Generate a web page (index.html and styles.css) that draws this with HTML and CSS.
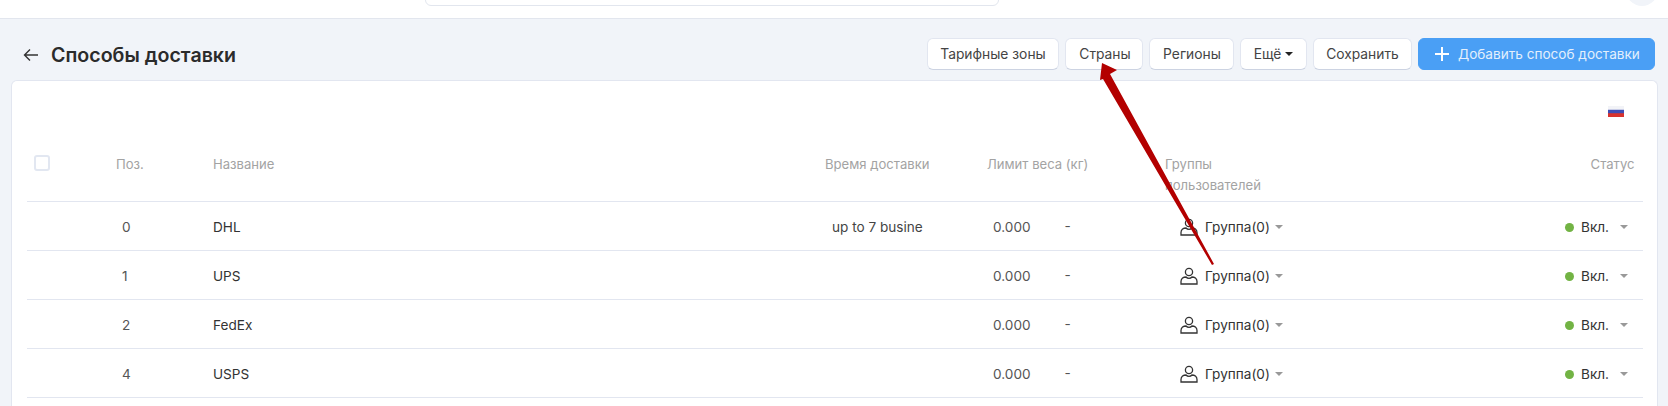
FILE: index.html
```html
<!DOCTYPE html>
<html lang="ru">
<head>
<meta charset="utf-8">
<title>Способы доставки</title>
<link rel="stylesheet" href="styles.css">
</head>
<body>
<header class="topbar">
  <div class="search"></div>
  <div class="avatar"></div>
</header>
<div class="titlebar">
  <div class="title-wrap">
    <svg class="back" viewBox="0 0 16 14" width="16" height="14"><path d="M15 7H1.500M7 1.500 1.500 7 7 12.500" fill="none" stroke="#333" stroke-width="1.4"/></svg>
    <h1>Способы доставки</h1>
  </div>
  <div class="actions">
    <button class="btn btn-zones">Тарифные зоны</button>
    <button class="btn btn-countries">Страны</button>
    <button class="btn btn-regions">Регионы</button>
    <button class="btn btn-more">Ещё<span class="caret-dark"></span></button>
    <button class="btn btn-save">Сохранить</button>
    <button class="btn primary"><svg viewBox="0 0 14 14" width="14" height="14"><path d="M7 0v14M0 7h14" stroke="#fff" stroke-width="2"/></svg>Добавить способ доставки</button>
  </div>
</div>
<main class="card">
  <div class="flag-row"><div class="flag"></div></div>
  <div class="row head">
    <div><span class="check"></span></div>
    <div>Поз.</div>
    <div>Название</div>
    <div>Время доставки</div>
    <div>Лимит веса (кг)</div>
    <div class="groups-head">Группы<br>пользователей</div>
    <div class="status-head">Статус</div>
  </div>
  <div class="row body">
    <div></div><div class="pos">0</div><div>DHL</div><div class="time">up to 7 busine</div>
    <div class="weight"><span class="num">0.000</span><span class="dash">-</span></div>
    <div class="group"><svg class="user" viewBox="0 0 18 18" width="18" height="18"><circle cx="9" cy="5" r="3.600"/><path d="M1 17v-2.500C1 11.500 3.500 10 6 10c.8 1 1.800 1.400 3 1.400s2.200-.4 3-1.400c2.500 0 5 1.500 5 4.500V17z"/></svg>Группа(0)<span class="caret"></span></div>
    <div class="status"><span class="dot"></span>Вкл.<span class="caret wide"></span></div>
  </div>
  <div class="row body">
    <div></div><div class="pos">1</div><div>UPS</div><div class="time"></div>
    <div class="weight"><span class="num">0.000</span><span class="dash">-</span></div>
    <div class="group"><svg class="user" viewBox="0 0 18 18" width="18" height="18"><circle cx="9" cy="5" r="3.600"/><path d="M1 17v-2.500C1 11.500 3.500 10 6 10c.8 1 1.800 1.400 3 1.400s2.200-.4 3-1.400c2.500 0 5 1.500 5 4.500V17z"/></svg>Группа(0)<span class="caret"></span></div>
    <div class="status"><span class="dot"></span>Вкл.<span class="caret wide"></span></div>
  </div>
  <div class="row body">
    <div></div><div class="pos">2</div><div>FedEx</div><div class="time"></div>
    <div class="weight"><span class="num">0.000</span><span class="dash">-</span></div>
    <div class="group"><svg class="user" viewBox="0 0 18 18" width="18" height="18"><circle cx="9" cy="5" r="3.600"/><path d="M1 17v-2.500C1 11.500 3.500 10 6 10c.8 1 1.800 1.400 3 1.400s2.200-.4 3-1.400c2.500 0 5 1.500 5 4.500V17z"/></svg>Группа(0)<span class="caret"></span></div>
    <div class="status"><span class="dot"></span>Вкл.<span class="caret wide"></span></div>
  </div>
  <div class="row body">
    <div></div><div class="pos">4</div><div>USPS</div><div class="time"></div>
    <div class="weight"><span class="num">0.000</span><span class="dash">-</span></div>
    <div class="group"><svg class="user" viewBox="0 0 18 18" width="18" height="18"><circle cx="9" cy="5" r="3.600"/><path d="M1 17v-2.500C1 11.500 3.500 10 6 10c.8 1 1.800 1.400 3 1.400s2.200-.4 3-1.400c2.500 0 5 1.500 5 4.500V17z"/></svg>Группа(0)<span class="caret"></span></div>
    <div class="status"><span class="dot"></span>Вкл.<span class="caret wide"></span></div>
  </div>
</main>
<svg class="annotation" viewBox="0 0 1668 406" width="1668" height="406"><polygon points="1102,63 1117,70 1110,74 1214,264 1212,265 1103,79 1100,80" fill="#b30000"/></svg>
</body>
</html>
```
FILE: styles.css
```css
* { box-sizing: border-box; }
html, body { margin: 0; height: 406px; overflow: hidden; }
body { background: #f1f4f9; font-family: Inter, "Liberation Sans", sans-serif; color: #333; font-size: 13.6px; position: relative; }
.topbar { height: 19px; background: #fff; border-bottom: 1px solid #e2e6ee; position: relative; overflow: hidden; }
.search { position: absolute; left: 425px; top: -20px; width: 574px; height: 26px; border: 1px solid #e2e6ee; border-radius: 6px; }
.avatar { position: absolute; left: 1626px; top: -26px; width: 32px; height: 32px; border-radius: 50%; background: #f1f4f9; }
.titlebar { height: 61px; display: flex; justify-content: space-between; align-items: flex-start; padding: 19px 13px 0 23px; }
.title-wrap { display: flex; align-items: center; height: 34px; }
.back { margin-right: 12px; }
h1 { margin: 0; font-size: 19.6px; font-weight: 600; color: #2b2b2b; }
.actions { display: flex; gap: 6px; }
.btn { height: 32px; padding: 0; background: #fff; border: 1px solid #e2e6f0; border-bottom-color: #ccd3e2; border-radius: 6px; font: 13.8px Inter, "Liberation Sans", sans-serif; color: #444; display: flex; align-items: center; justify-content: center; white-space: nowrap; }
.btn-zones { width: 132px; }
.btn-countries { width: 78px; padding-left: 2px; }
.btn-regions { width: 85px; padding-left: 1px; }
.btn-more { width: 67px; }
.btn-save { width: 99px; }
.primary { background: #4a9ff5; border-color: #4a9ff5; color: #e3effc; width: 237px; justify-content: flex-start; padding-left: 16px; font-size: 13.6px; }
.primary svg { margin-right: 9px; flex: none; }
.caret-dark { display: inline-block; margin-left: 4px; border: 4px solid transparent; border-top: 4px solid #222; border-bottom: 0; }
.card { height: 326px; margin: 0 10px 0 11px; background: #fff; border: 1px solid #e2e6f0; border-bottom: 0; border-radius: 6px 6px 0 0; padding: 0 14px 0 15px; overflow: hidden; }
.flag-row { height: 53px; display: flex; justify-content: flex-end; padding: 25px 19px 0 0; }
.flag { width: 16px; height: 11px; background: linear-gradient(#f2f3f7 0 30%, #3f4db5 38% 62%, #d8332e 70% 100%); }
.row { display: grid; grid-template-columns: 89px 97px 612px 162px 179px 334px 143px; border-bottom: 1px solid #e2e6f0; align-items: center; }
.head { height: 68px; align-items: start; color: #a3a3a3; font-size: 13.1px; line-height: 20px; padding-top: 20px; }
.check { display: block; width: 16px; height: 16px; margin: 1px 0 0 7px; border: 2px solid #e2e7f1; border-radius: 3px; }
.groups-head { line-height: 21px; margin-left: -1px; }
.status-head { text-align: right; padding-right: 8.5px; }
.body { height: 49px; padding-top: 2px; }
.pos { padding-left: 6px; color: #555; }
.time { padding-left: 7px; color: #444; }
.weight { display: flex; align-items: center; padding-left: 6px; color: #555; }
.dash { margin-left: 34px; margin-top: -3px; }
.group { display: flex; align-items: center; padding-left: 14px; color: #333; }
.user { margin-right: 7px; fill: none; stroke: #333; stroke-width: 1.3; }
.caret { display: inline-block; margin-left: 5px; border: 4.5px solid transparent; border-top: 4.5px solid #999; border-bottom: 0; }
.caret.wide { margin-left: 11px; }
.status { display: flex; align-items: center; justify-content: flex-end; padding-right: 15px; color: #333; }
.dot { width: 9px; height: 9px; border-radius: 50%; background: #72b344; margin-right: 7px; }
.annotation { position: absolute; left: 0; top: 0; pointer-events: none; }
```
